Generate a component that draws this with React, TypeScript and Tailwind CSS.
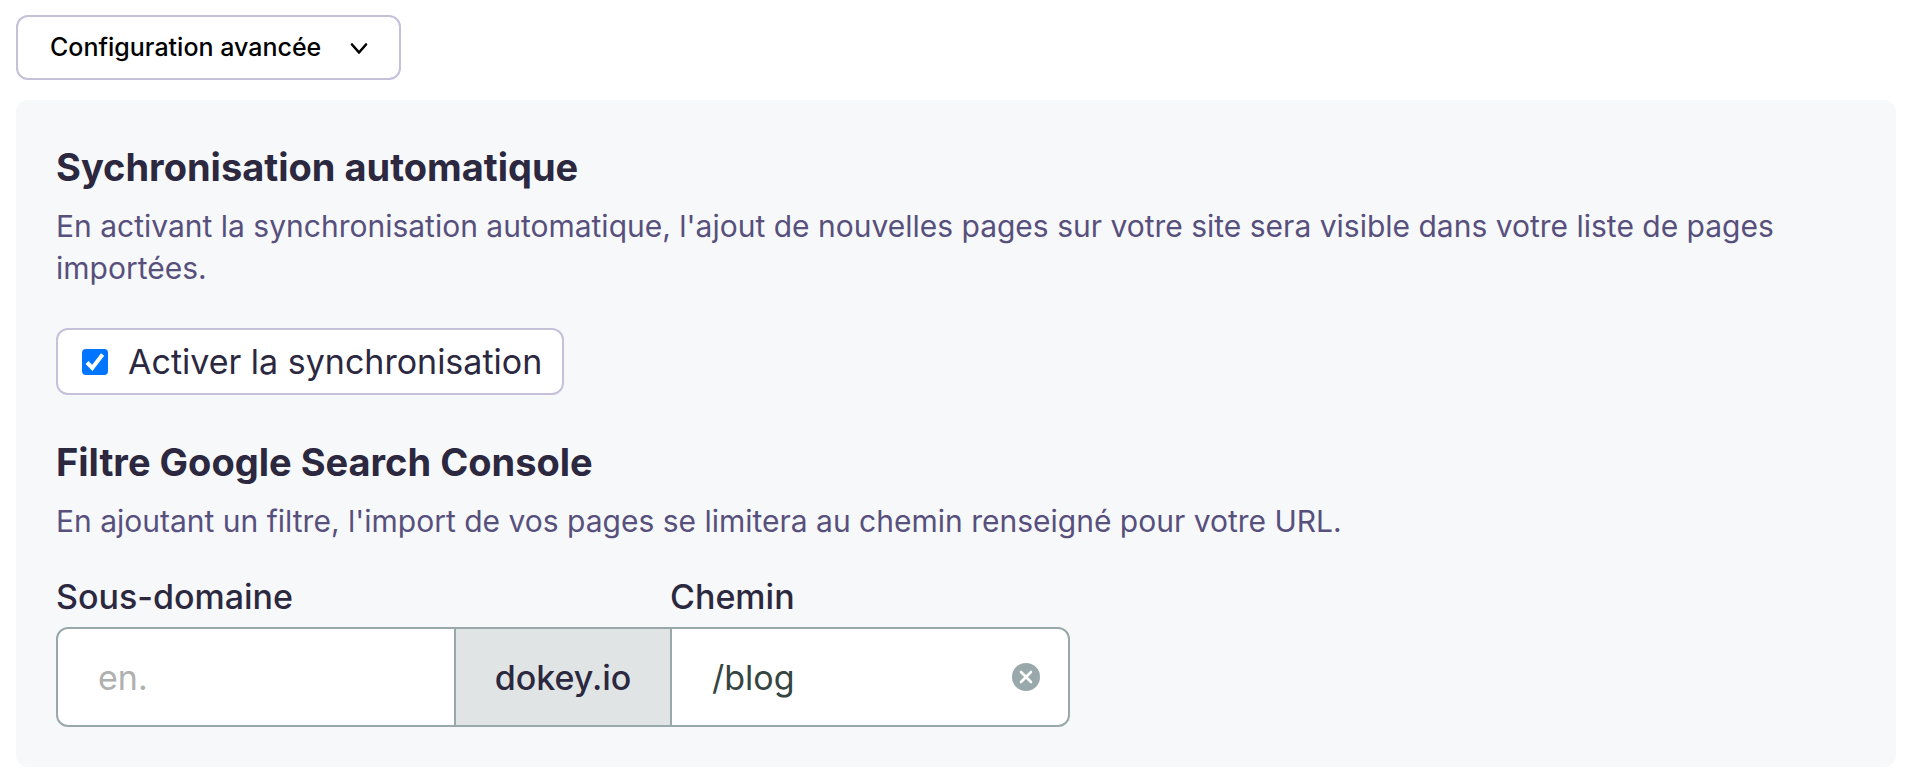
import React, { useState } from 'react';

const Title: React.FC<{ children: React.ReactNode }> = ({ children }) => (
    <h2 className="text-[38px] leading-[54px] font-bold text-[#2b283f]">{children}</h2>
);

const Description: React.FC<{ children: React.ReactNode }> = ({ children }) => (
    <p className="mt-[11px] text-[30px] leading-[42px] text-[#57507d]">{children}</p>
);

const App: React.FC = () => {
    const [isOpen, setIsOpen] = useState(true);
    const [autoSync, setAutoSync] = useState(true);
    const [subdomain, setSubdomain] = useState('');
    const [path, setPath] = useState('/blog');

    return (
        <main className="bg-white pt-[15px] pr-[22px] pb-[15px] pl-4 font-['Inter',sans-serif]">
            <button
                type="button"
                aria-expanded={isOpen}
                className="flex h-[65px] w-[385px] items-center justify-between rounded-xl border-2 border-[#c5c1da] bg-white pr-[30px] pl-8 text-[25px] font-medium text-black"
                onClick={() => setIsOpen(!isOpen)}
            >
                Configuration avancée
                <svg className="h-5 w-5" viewBox="0 0 20 20" fill="none" stroke="currentColor" strokeWidth="2.6" strokeLinecap="round" strokeLinejoin="round" aria-hidden="true">
                    <path d="M3 6.5l7 8 7-8" />
                </svg>
            </button>

            {isOpen && (
                <section className="mt-5 rounded-xl bg-[#f7f8fa] p-10">
                    <Title>Sychronisation automatique</Title>
                    <Description>
                        {`En activant la synchronisation automatique, l'ajout de nouvelles pages sur votre site sera visible dans votre liste de pages importées.`}
                    </Description>

                    <label className="mt-[39px] flex h-[67px] w-[508px] items-center gap-5 rounded-xl border-2 border-[#c5c1da] bg-white px-6 text-[34px] whitespace-nowrap text-[#2b283f]">
                        <span className="relative flex h-[26px] w-[26px] shrink-0">
                            <input
                                type="checkbox"
                                className="h-[26px] w-[26px] appearance-none rounded border-2 border-[#767676] bg-white checked:border-[#0075ff] checked:bg-[#0075ff]"
                                checked={autoSync}
                                onChange={e => setAutoSync(e.target.checked)}
                            />
                            {autoSync && (
                                <svg className="pointer-events-none absolute inset-0 h-[26px] w-[26px]" viewBox="0 0 26 26" fill="none" stroke="white" strokeWidth="4" aria-hidden="true">
                                    <path d="M5 13.5l5.3 5.5L20.6 5.5" />
                                </svg>
                            )}
                        </span>
                        Activer la synchronisation
                    </label>

                    <div className="mt-10">
                        <Title>Filtre Google Search Console</Title>
                        <Description>{`En ajoutant un filtre, l'import de vos pages se limitera au chemin renseigné pour votre URL.`}</Description>
                    </div>

                    {/* Labels share the column widths of the fields below */}
                    <div className="mt-[35px] grid w-[1014px] max-w-full grid-cols-[396px_218px_1fr] text-[34px] text-[#2b283f]">
                        <label htmlFor="subdomain" className="col-span-2 leading-10 font-medium">Sous-domaine</label>
                        <label htmlFor="path" className="leading-10 font-medium">Chemin</label>
                    </div>
                    <div className="mt-[10px] grid h-[100px] w-[1014px] max-w-full grid-cols-[396px_218px_1fr] overflow-hidden rounded-xl border-2 border-[#99a9ab] bg-white text-[34px]">
                        <input
                            id="subdomain"
                            type="text"
                            placeholder="en."
                            className="min-w-0 px-10 text-[#344542] outline-none placeholder:text-[#b0b0b0]"
                            value={subdomain}
                            onChange={e => setSubdomain(e.target.value)}
                        />
                        <span className="flex items-center justify-center border-x-2 border-[#99a9ab] bg-[#e0e4e4] font-medium text-[#2b283f]">dokey.io</span>
                        <div className="flex min-w-0 items-center pr-7 pl-10">
                            <input
                                id="path"
                                type="text"
                                className="min-w-0 flex-1 text-[#344542] outline-none"
                                value={path}
                                onChange={e => setPath(e.target.value)}
                            />
                            <button type="button" aria-label="Effacer" onClick={() => setPath('')}>
                                <svg className="h-7 w-7" viewBox="0 0 28 28" aria-hidden="true">
                                    <circle cx="14" cy="14" r="14" fill="#99a9ab" />
                                    <path d="M9 9l10 10M19 9L9 19" stroke="white" strokeWidth="2.6" strokeLinecap="round" />
                                </svg>
                            </button>
                        </div>
                    </div>
                </section>
            )}
        </main>
    );
};

export default App;
